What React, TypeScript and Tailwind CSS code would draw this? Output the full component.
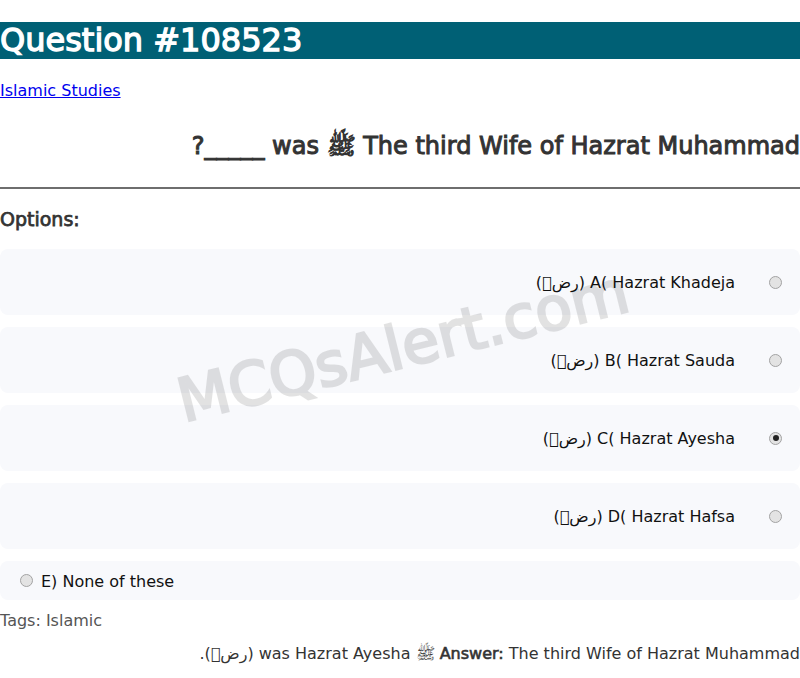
import React from "react";

type Opt = { text: string; checked: boolean };

const opts: Opt[] = [
  { text: "A( Hazrat Khadeja (رضؓ)", checked: false },
  { text: "B( Hazrat Sauda (رضؓ)", checked: false },
  { text: "C( Hazrat Ayesha (رضؓ)", checked: true },
  { text: "D( Hazrat Hafsa (رضؓ)", checked: false },
];

function Radio({ checked }: { checked: boolean }) {
  return (
    <span className="flex h-[13px] w-[13px] shrink-0 items-center justify-center rounded-full border border-[#a3a3a3] bg-[#e3e3e3]">
      {checked && <span className="h-[6px] w-[6px] rounded-full bg-[#222]" />}
    </span>
  );
}

export default function App() {
  return (
    <div className="relative min-h-[678px] overflow-hidden bg-white font-['DejaVu_Sans',sans-serif] text-[16px]">
      <h1 className="mt-[22px] bg-[#006075] text-[32px] font-normal leading-[37px] text-white [-webkit-text-stroke:1.3px_#fff]">
        Question #108523
      </h1>
      <div className="mt-[22px] leading-[19px]">
        <a href="#" className="text-[#0000ee] underline">
          Islamic Studies
        </a>
      </div>
      <h2
        dir="rtl"
        className="mt-[32px] text-[24px] font-normal leading-[28px] text-[#333] [-webkit-text-stroke:1px_#333]"
      >
        The third Wife of Hazrat Muhammad ﷺ was _____?
      </h2>
      <div className="mt-[27px] h-[2px] bg-[#6e6e6e]" />
      <div className="mt-[19px] text-[19px] font-normal leading-[22px] text-[#333] [-webkit-text-stroke:0.75px_#333]">
        Options:
      </div>
      <div className="mt-[19px] flex flex-col gap-[12px]">
        {opts.map((o) => (
          <div
            key={o.text}
            dir="rtl"
            className="flex h-[66px] items-center gap-[34px] rounded-lg bg-[#f8f9fc] pr-[18px]"
          >
            <Radio checked={o.checked} />
            <span className="leading-[19px] text-[#111]">{o.text}</span>
          </div>
        ))}
        <div className="flex h-[39px] items-center gap-[8px] rounded-lg bg-[#f8f9fc] pl-[20px]">
          <Radio checked={false} />
          <span className="pt-[1px] leading-[19px] text-[#111]">E) None of these</span>
        </div>
      </div>
      <p className="mt-[11px] leading-[19px] text-[#555]">Tags: Islamic</p>
      <p dir="rtl" className="mt-[14px] leading-[19px] text-[#333]">
        <span className="[-webkit-text-stroke:0.6px_#333]">Answer:</span> The third Wife of Hazrat Muhammad ﷺ was
        Hazrat Ayesha (رضؓ).
      </p>
      <div className="pointer-events-none absolute left-[403px] top-[346px] -translate-x-1/2 -translate-y-1/2 rotate-[-14deg] whitespace-nowrap text-[60px] font-normal leading-[70px] text-black opacity-[0.11] [-webkit-text-stroke:2.5px_#000]">
        MCQsAlert.com
      </div>
    </div>
  );
}
